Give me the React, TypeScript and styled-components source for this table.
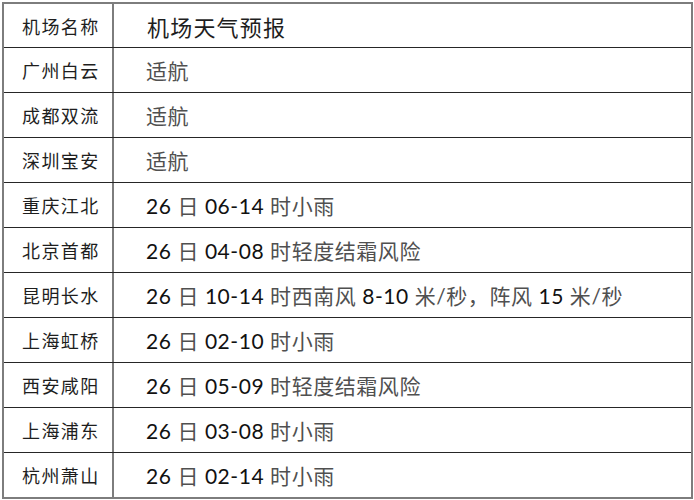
import React from 'react'
import styled, { createGlobalStyle } from 'styled-components'

const GlobalStyle = createGlobalStyle`
  html, body {
    margin: 0;
    padding: 0;
    background: #ffffff;
  }
`

const Table = styled.div`
  margin: 2px 0 0 2px;
  width: 691px;
  box-sizing: border-box;
  border: 2px solid #7d7d7d;
  background: #ffffff;
`

const Row = styled.div<{ header?: boolean }>`
  display: grid;
  grid-template-columns: 110px 1fr;
  height: ${({ header }) => (header ? '43px' : '44px')};
  border-top: ${({ header }) => (header ? 'none' : '1px solid #262626')};
`

const NameCell = styled.div`
  display: flex;
  align-items: center;
  padding-left: 18px;
  border-right: 2px solid #7d7d7d;
  font-family: 'Noto Sans CJK SC', sans-serif;
  font-size: 18px;
  letter-spacing: 1.4px;
  color: #1e1e1e;
`

const ForecastCell = styled.div<{ header?: boolean }>`
  display: flex;
  align-items: center;
  padding-left: ${({ header }) => (header ? '33px' : '32px')};
  font-family: Lato, 'Noto Sans CJK SC', sans-serif;
  font-size: ${({ header }) => (header ? '22px' : '21px')};
  letter-spacing: ${({ header }) => (header ? '1.2px' : '0.55px')};
  color: ${({ header }) => (header ? '#1e1e1e' : '#505050')};
  white-space: pre;

  .num {
    color: #111111;
  }
`

type Item = { airport: string; forecast: string }

const rows: Item[] = [
  { airport: '广州白云', forecast: '适航' },
  { airport: '成都双流', forecast: '适航' },
  { airport: '深圳宝安', forecast: '适航' },
  { airport: '重庆江北', forecast: '26 日 06-14 时小雨' },
  { airport: '北京首都', forecast: '26 日 04-08 时轻度结霜风险' },
  { airport: '昆明长水', forecast: '26 日 10-14 时西南风 8-10 米/秒，阵风 15 米/秒' },
  { airport: '上海虹桥', forecast: '26 日 02-10 时小雨' },
  { airport: '西安咸阳', forecast: '26 日 05-09 时轻度结霜风险' },
  { airport: '上海浦东', forecast: '26 日 03-08 时小雨' },
  { airport: '杭州萧山', forecast: '26 日 02-14 时小雨' },
]

// digits and dashes come out darker than the CJK text in the picture
function renderForecast(text: string) {
  return text.split(/([0-9\-/]+)/).map((part, i) =>
    /[0-9]/.test(part) ? (
      <span className="num" key={i}>
        {part}
      </span>
    ) : (
      <React.Fragment key={i}>{part}</React.Fragment>
    ),
  )
}

export default function App(): JSX.Element {
  return (
    <>
      <GlobalStyle />
      <Table>
        <Row header>
          <NameCell>机场名称</NameCell>
          <ForecastCell header>机场天气预报</ForecastCell>
        </Row>
        {rows.map((row) => (
          <Row key={row.airport}>
            <NameCell>{row.airport}</NameCell>
            <ForecastCell>{renderForecast(row.forecast)}</ForecastCell>
          </Row>
        ))}
      </Table>
    </>
  )
}
